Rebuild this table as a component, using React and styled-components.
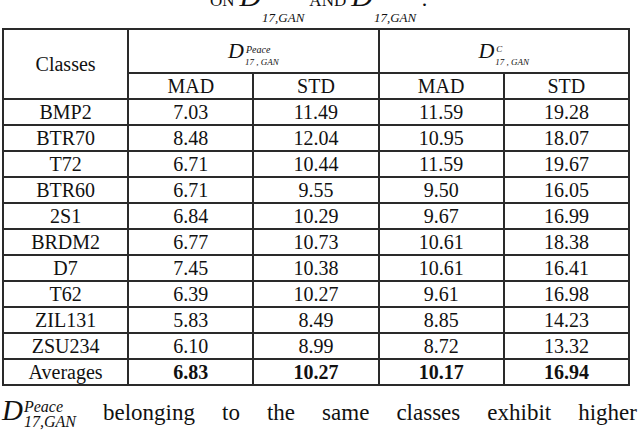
import React from "react"
import styled, { createGlobalStyle } from "styled-components"

const serif = `"Liberation Serif", "Times New Roman", "DejaVu Serif", serif`

const Global = createGlobalStyle`
  html, body {
    margin: 0;
    padding: 0;
    background: #fff;
  }
  body {
    width: 640px;
    height: 434px;
    overflow: hidden;
    font-family: ${serif};
    color: #111;
  }
`

const Page = styled.div`
  width: 640px;
  height: 434px;
  overflow: hidden;
  display: flex;
  flex-direction: column;
  font-family: ${serif};
  & > * {
    flex-shrink: 0;
  }
`

// caption is cut off by the top of the page, only its lower half shows
const Caption = styled.div`
  height: 28px;
  overflow: hidden;
  display: flex;
  justify-content: center;
  padding-right: 8px;
`

const CaptionLine = styled.div`
  margin-top: -17px;
  white-space: nowrap;
  font-family: ${serif};
  font-size: 22px;
  line-height: 26px;
`

const SmallCaps = styled.span`
  font-variant: small-caps;
  text-transform: lowercase;
  font-size: 24px;
  margin: 0 5px;
`

const Sym = styled.span`
  display: inline-block;
  white-space: nowrap;
  font-family: ${serif};
`

const Big = styled.span`
  font-style: italic;
  font-size: ${(p) => p.$size || 28}px;
`

// stacked super/subscript; baseline of the block is the subscript line
const Scripts = styled.span`
  display: inline-block;
  font-style: italic;
  vertical-align: ${(p) => -(p.$drop || 0)}px;
  margin-left: ${(p) => p.$gap || 1}px;
  text-align: left;
`

const Sup = styled.span`
  display: block;
  font-size: ${(p) => p.$size || 10}px;
  line-height: ${(p) => p.$lh || 10}px;
  margin-left: ${(p) => p.$indent || 0}px;
`

const Sub = styled.span`
  display: block;
  font-size: ${(p) => p.$size || 10}px;
  line-height: ${(p) => p.$lh || 10}px;
  white-space: pre;
`

const Table = styled.table`
  margin-left: 2px;
  width: 628px;
  border-collapse: collapse;
  table-layout: fixed;
  font-family: ${serif};
  font-size: 20px;
`

const Row = styled.tr`
  height: ${(p) => p.$h || 26}px;
`

const Cell = styled.td`
  border: 2px solid #2a2a2a;
  text-align: center;
  padding: 0;
  font-family: ${serif};
  font-size: 20px;
  font-weight: ${(p) => (p.$bold ? 700 : 400)};
  line-height: 22px;
  vertical-align: middle;
`

const GroupCell = styled(Cell)`
  vertical-align: bottom;
  padding-bottom: 5px;
  line-height: 20px;
`

const Para = styled.p`
  margin: 10px 3px 0 2px;
  font-family: ${serif};
  font-size: 23px;
  line-height: 28px;
  display: flex;
  align-items: baseline;
  justify-content: space-between;
`

const Word = styled.span`
  font-family: ${serif};
`

const rows = [
  ["BMP2", "7.03", "11.49", "11.59", "19.28"],
  ["BTR70", "8.48", "12.04", "10.95", "18.07"],
  ["T72", "6.71", "10.44", "11.59", "19.67"],
  ["BTR60", "6.71", "9.55", "9.50", "16.05"],
  ["2S1", "6.84", "10.29", "9.67", "16.99"],
  ["BRDM2", "6.77", "10.73", "10.61", "18.38"],
  ["D7", "7.45", "10.38", "10.61", "16.41"],
  ["T62", "6.39", "10.27", "9.61", "16.98"],
  ["ZIL131", "5.83", "8.49", "8.85", "14.23"],
  ["ZSU234", "6.10", "8.99", "8.72", "13.32"],
]

const HeaderSym = ({ sup }) => (
  <Sym>
    <Big $size={22}>D</Big>
    <Scripts $gap={0} $drop={7}>
      <Sup $size={sup === "C" ? 9 : 10} $lh={15} $indent={1}>
        {sup}
      </Sup>
      <Sub $size={9} $lh={10}>{"17 , GAN"}</Sub>
    </Scripts>
  </Sym>
)

const CaptionSym = () => (
  <Sym>
    <Big $size={30}>D</Big>
    <Scripts $gap={1} $drop={16}>
      <Sub $size={13} $lh={14}>17,GAN</Sub>
    </Scripts>
  </Sym>
)

export default function App() {
  return (
    <Page>
      <Global />
      <Caption>
        <CaptionLine>
          <SmallCaps>on</SmallCaps>
          <CaptionSym />
          <SmallCaps>and</SmallCaps>
          <CaptionSym />
          <span> .</span>
        </CaptionLine>
      </Caption>
      <Table>
        <tbody>
          <Row $h={44}>
            <Cell rowSpan={2}>Classes</Cell>
            <GroupCell colSpan={2}>
              <HeaderSym sup="Peace" />
            </GroupCell>
            <GroupCell colSpan={2}>
              <HeaderSym sup="C" />
            </GroupCell>
          </Row>
          <Row $h={26}>
            <Cell>MAD</Cell>
            <Cell>STD</Cell>
            <Cell>MAD</Cell>
            <Cell>STD</Cell>
          </Row>
          {rows.map((r) => (
            <Row key={r[0]}>
              {r.map((v, i) => (
                <Cell key={i}>{v}</Cell>
              ))}
            </Row>
          ))}
          <Row>
            <Cell>Averages</Cell>
            <Cell $bold>6.83</Cell>
            <Cell $bold>10.27</Cell>
            <Cell $bold>10.17</Cell>
            <Cell $bold>16.94</Cell>
          </Row>
        </tbody>
      </Table>
      <Para>
        <Sym>
          <Big $size={29}>D</Big>
          <Scripts $gap={1} $drop={7}>
            <Sup $size={16} $lh={15}>Peace</Sup>
            <Sub $size={16} $lh={15}>17,GAN</Sub>
          </Scripts>
        </Sym>
        <Word>belonging</Word>
        <Word>to</Word>
        <Word>the</Word>
        <Word>same</Word>
        <Word>classes</Word>
        <Word>exhibit</Word>
        <Word>higher</Word>
      </Para>
    </Page>
  )
}
